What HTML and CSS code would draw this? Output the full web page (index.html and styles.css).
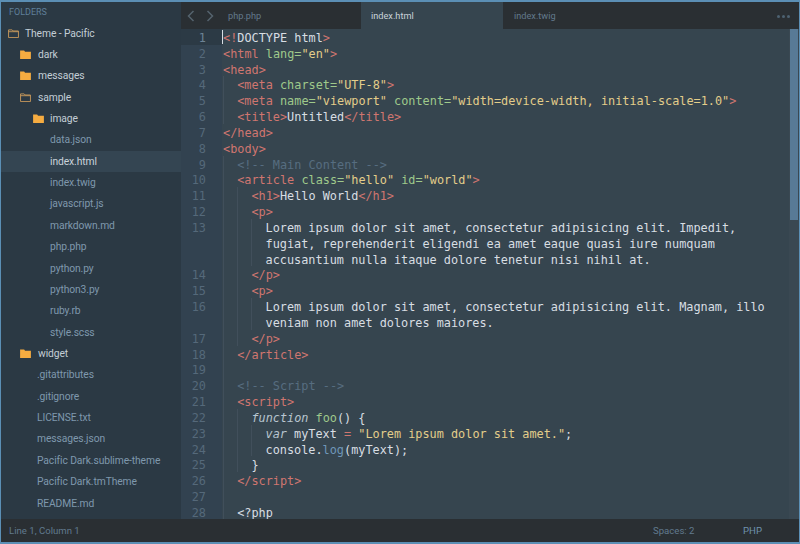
FILE: index.html
```html
<!DOCTYPE html>
<html lang="en">
<head>
    <meta charset="UTF-8">
    <title>index.html - Theme - Pacific</title>
    <link rel="stylesheet" href="styles.css">
</head>
<body>

<div class="window">
    <div class="main">
        <div class="sidebar">
            <div class="side-title">FOLDERS</div>
            <div class="row lvl0 open"><svg class="folder" viewBox="0 0 12 10"><path d="M.5 1h4l1 1.2h6v7.3H.5zM.5 3h11" fill="none" stroke="#c99a5b"/></svg>Theme - Pacific</div>
            <div class="row lvl1 open"><svg class="folder" viewBox="0 0 12 10"><path d="M0 .5h4.5l1 1.5H12v8H0z" fill="#f5ac41"/></svg>dark</div>
            <div class="row lvl1 open"><svg class="folder" viewBox="0 0 12 10"><path d="M0 .5h4.5l1 1.5H12v8H0z" fill="#f5ac41"/></svg>messages</div>
            <div class="row lvl1 open"><svg class="folder" viewBox="0 0 12 10"><path d="M.5 1h4l1 1.2h6v7.3H.5zM.5 3h11" fill="none" stroke="#c99a5b"/></svg>sample</div>
            <div class="row lvl2 open"><svg class="folder" viewBox="0 0 12 10"><path d="M0 .5h4.5l1 1.5H12v8H0z" fill="#f5ac41"/></svg>image</div>
            <div class="row file lvl2">data.json</div>
            <div class="row file lvl2 selected">index.html</div>
            <div class="row file lvl2">index.twig</div>
            <div class="row file lvl2">javascript.js</div>
            <div class="row file lvl2">markdown.md</div>
            <div class="row file lvl2">php.php</div>
            <div class="row file lvl2">python.py</div>
            <div class="row file lvl2">python3.py</div>
            <div class="row file lvl2">ruby.rb</div>
            <div class="row file lvl2">style.scss</div>
            <div class="row lvl1 open"><svg class="folder" viewBox="0 0 12 10"><path d="M0 .5h4.5l1 1.5H12v8H0z" fill="#f5ac41"/></svg>widget</div>
            <div class="row file lvl1">.gitattributes</div>
            <div class="row file lvl1">.gitignore</div>
            <div class="row file lvl1">LICENSE.txt</div>
            <div class="row file lvl1">messages.json</div>
            <div class="row file lvl1">Pacific Dark.sublime-theme</div>
            <div class="row file lvl1">Pacific Dark.tmTheme</div>
            <div class="row file lvl1">README.md</div>
        </div>

        <div class="editor">
            <div class="tabs">
                <div class="arrows">
                    <svg viewBox="0 0 8 12"><path d="M6.5 1 1.5 6l5 5" fill="none" stroke="#55636e" stroke-width="1.5"/></svg>
                    <svg viewBox="0 0 8 12"><path d="M1.5 1l5 5-5 5" fill="none" stroke="#55636e" stroke-width="1.5"/></svg>
                </div>
                <div class="tab first">php.php</div>
                <div class="tab active">index.html</div>
                <div class="tab last">index.twig</div>
                <div class="more"><span></span><span></span><span></span></div>
            </div>
            <div class="code-area">
                <div class="code">
                    <div class="ln current"><b>1</b><code><s class="cursor"></s><u>&lt;!</u>DOCTYPE html<u>&gt;</u></code></div>
                    <div class="ln"><b>2</b><code><u>&lt;html</u> <em>lang=</em><q>"en"</q><u>&gt;</u></code></div>
                    <div class="ln"><b>3</b><code><u>&lt;head&gt;</u></code></div>
                    <div class="ln"><b>4</b><code><i></i><u>&lt;meta</u> <em>charset=</em><q>"UTF-8"</q><u>&gt;</u></code></div>
                    <div class="ln"><b>5</b><code><i></i><u>&lt;meta</u> <em>name=</em><q>"viewport"</q> <em>content=</em><q>"width=device-width, initial-scale=1.0"</q><u>&gt;</u></code></div>
                    <div class="ln"><b>6</b><code><i></i><u>&lt;title&gt;</u>Untitled<u>&lt;/title&gt;</u></code></div>
                    <div class="ln"><b>7</b><code><u>&lt;/head&gt;</u></code></div>
                    <div class="ln"><b>8</b><code><u>&lt;body&gt;</u></code></div>
                    <div class="ln"><b>9</b><code><i></i><span class="cm">&lt;!-- Main Content --&gt;</span></code></div>
                    <div class="ln"><b>10</b><code><i></i><u>&lt;article</u> <em>class=</em><q>"hello"</q> <em>id=</em><q>"world"</q><u>&gt;</u></code></div>
                    <div class="ln"><b>11</b><code><i></i><i></i><u>&lt;h1&gt;</u>Hello World<u>&lt;/h1&gt;</u></code></div>
                    <div class="ln"><b>12</b><code><i></i><i></i><u>&lt;p&gt;</u></code></div>
                    <div class="ln"><b>13</b><code><i></i><i></i><i></i>Lorem ipsum dolor sit amet, consectetur adipisicing elit. Impedit,</code></div>
                    <div class="ln"><b></b><code><i></i><i></i><i></i>fugiat, reprehenderit eligendi ea amet eaque quasi iure numquam</code></div>
                    <div class="ln"><b></b><code><i></i><i></i><i></i>accusantium nulla itaque dolore tenetur nisi nihil at.</code></div>
                    <div class="ln"><b>14</b><code><i></i><i></i><u>&lt;/p&gt;</u></code></div>
                    <div class="ln"><b>15</b><code><i></i><i></i><u>&lt;p&gt;</u></code></div>
                    <div class="ln"><b>16</b><code><i></i><i></i><i></i>Lorem ipsum dolor sit amet, consectetur adipisicing elit. Magnam, illo</code></div>
                    <div class="ln"><b></b><code><i></i><i></i><i></i>veniam non amet dolores maiores.</code></div>
                    <div class="ln"><b>17</b><code><i></i><i></i><u>&lt;/p&gt;</u></code></div>
                    <div class="ln"><b>18</b><code><i></i><u>&lt;/article&gt;</u></code></div>
                    <div class="ln"><b>19</b><code><i></i></code></div>
                    <div class="ln"><b>20</b><code><i></i><span class="cm">&lt;!-- Script --&gt;</span></code></div>
                    <div class="ln"><b>21</b><code><i></i><u>&lt;script&gt;</u></code></div>
                    <div class="ln"><b>22</b><code><i></i><i></i><span class="kw">function</span> <em>foo</em>() {</code></div>
                    <div class="ln"><b>23</b><code><i></i><i></i><i></i><span class="kw">var</span> myText <u>=</u> <q>"Lorem ipsum dolor sit amet."</q>;</code></div>
                    <div class="ln"><b>24</b><code><i></i><i></i><i></i>console.<span class="fn">log</span>(myText);</code></div>
                    <div class="ln"><b>25</b><code><i></i><i></i>}</code></div>
                    <div class="ln"><b>26</b><code><i></i><u>&lt;/script&gt;</u></code></div>
                    <div class="ln"><b>27</b><code><i></i></code></div>
                    <div class="ln"><b>28</b><code><i></i>&lt;?php</code></div>
                </div>
                <div class="scrollbar"><div class="thumb"></div></div>
            </div>
        </div>
    </div>

    <div class="status">
        <span class="pos">Line 1, Column 1</span>
        <span class="spaces">Spaces: 2</span>
        <span class="lang">PHP</span>
    </div>
</div>

</body>
</html>
```

FILE: styles.css
```css
/* Sublime Text window, Pacific Dark theme */
html, body {
    margin: 0;
    padding: 0;
    height: 100%;
    overflow: hidden;
    background-color: #5b8fb5;
}

.window {
    box-sizing: border-box;
    height: 544px;
    margin: 0;
    border: 1px solid #5b8fb5;
    border-bottom-width: 2px;
    border-top-width: 2px;
    display: flex;
    flex-direction: column;
    font-family: Roboto, sans-serif;
}

.main {
    flex: 1;
    display: flex;
    min-height: 0;
}

/* Sidebar */
.sidebar {
    width: 180px;
    flex: none;
    overflow: hidden;
    background-color: #2b3944;
    color: #c3ced6;
    font-size: 10.3px;
    letter-spacing: -0.1px;
}

.side-title {
    height: 20.6px;
    line-height: 21px;
    padding-left: 8px;
    font-size: 9px;
    letter-spacing: 0;
    color: #5f7f99;
}

.row {
    height: 21.36px;
    line-height: 21.36px;
    white-space: nowrap;
    display: flex;
    align-items: center;
}

.lvl0 { padding-left: 7px; }
.lvl1 { padding-left: 19px; }
.lvl2 { padding-left: 32px; }

.row.file { color: #7f98ad; }
.row.file.lvl1 { padding-left: 36px; }
.row.file.lvl2 { padding-left: 49px; }

.row.selected {
    background-color: #344552;
    color: #c9d3da;
}

.folder {
    width: 11px;
    height: 9px;
    margin-right: 6px;
    flex: none;
}

.lvl1 .folder { margin-right: 7px; }

/* Tabs */
.editor {
    flex: 1;
    min-width: 0;
    display: flex;
    flex-direction: column;
    background-color: #36454f;
}

.tabs {
    height: 27px;
    flex: none;
    display: flex;
    align-items: center;
    background-color: #2a2f33;
    position: relative;
    font-size: 9.2px;
    color: #62798c;
}

.arrows {
    width: 46px;
    flex: none;
    display: flex;
    gap: 11px;
    padding-left: 6px;
    box-sizing: border-box;
}

.arrows svg {
    width: 8px;
    height: 12px;
}

.tab {
    height: 100%;
    line-height: 27px;
    box-sizing: border-box;
}

.tab.first {
    width: 134px;
    padding-left: 1px;
}

.tab.active {
    width: 142px;
    padding-left: 10px;
    background-color: #36454f;
    color: #c9d3da;
}

.tab.last {
    padding-left: 11px;
}

.more {
    position: absolute;
    right: 9px;
    top: 13px;
    display: flex;
    gap: 2px;
}

.more span {
    width: 3px;
    height: 3px;
    border-radius: 50%;
    background-color: #4d6272;
}

/* Code */
.code-area {
    flex: 1;
    min-height: 0;
    display: flex;
}

.code {
    flex: 1;
    min-width: 0;
    overflow: hidden;
    font-family: "DejaVu Sans Mono", monospace;
    font-size: 11.85px;
    color: #d8dee3;
}

.ln {
    height: 15.84px;
    line-height: 19px;
    display: flex;
    white-space: pre;
}

.ln b {
    width: 41px;
    flex: none;
    box-sizing: border-box;
    padding-right: 16px;
    text-align: right;
    font-weight: normal;
    color: #55697a;
    background-color: #324250;
}

.ln.current b {
    background-color: #2c3a45;
    color: #6d8395;
}

.ln code {
    font: inherit;
    padding-left: 1px;
    position: relative;
}

.ln i {
    display: inline-block;
    box-sizing: border-box;
    width: 14.2px;
    height: 15.84px;
    vertical-align: top;
    border-left: 1px solid #414f5b;
}

.ln u { text-decoration: none; color: #d0766f; }
.ln em { font-style: normal; color: #9fc98b; }
.ln q { quotes: none; color: #e3cd8a; }
.ln .cm { color: #566d80; }
.ln .kw { font-style: italic; color: #b9c6d0; }
.ln .fn { color: #6f97b8; }

.cursor {
    position: absolute;
    left: 0;
    top: 1px;
    width: 1px;
    height: 14px;
    background-color: #d8dee3;
}

.scrollbar {
    width: 10px;
    flex: none;
    background-color: #3a4852;
}

.thumb {
    height: 191px;
    margin: 0 1px;
    background-color: #587a96;
}

/* Status bar */
.status {
    height: 23px;
    flex: none;
    display: flex;
    align-items: center;
    padding-left: 8px;
    background-color: #2a2f33;
    font-size: 9.6px;
    color: #617a8e;
}

.pos { flex: 1; }
.spaces { width: 90px; }
.lang { width: 56px; color: #6f92ad; }
```
